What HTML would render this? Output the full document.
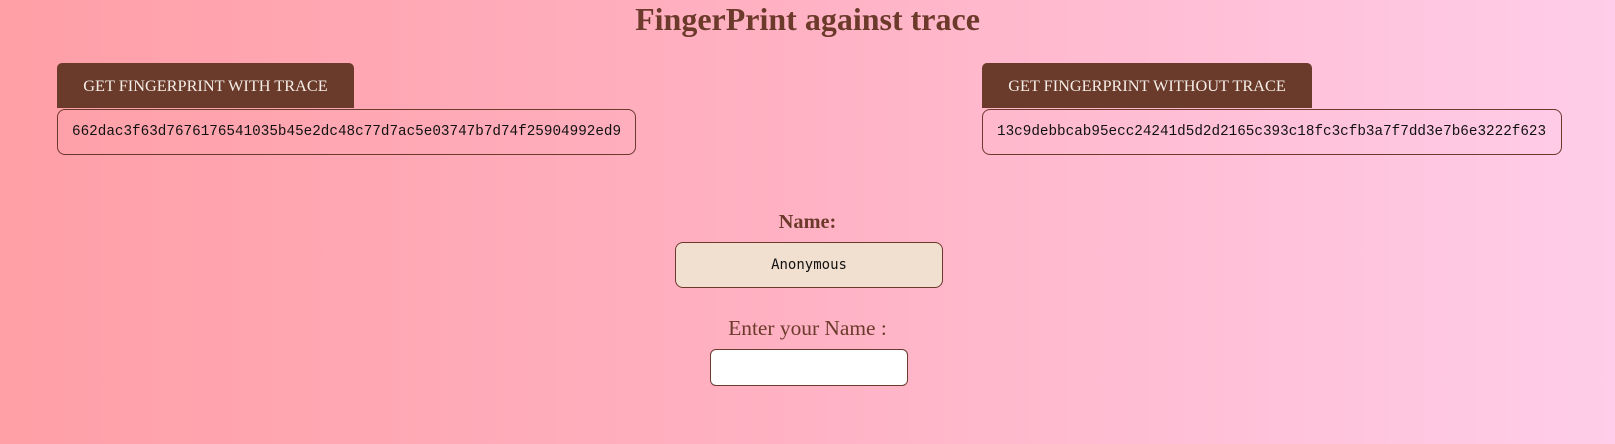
<!DOCTYPE html>
<html><head><style>
*{box-sizing:border-box;margin:0;padding:0}
html,body{width:1615px;height:444px;overflow:hidden}
body{background:linear-gradient(to right,#ff9fa6,#ffb2c4 50%,#ffcde9);font-family:"Liberation Serif",serif;color:#6b3a2b;position:relative}
.a{position:absolute}
h1{position:absolute;left:0;width:1615px;top:0;text-align:center;font-size:32px;font-weight:bold;line-height:38px}
.btn{background:#6a3a2a;color:#f5eee8;font-size:16.3px;border-radius:5px 5px 0 0;display:flex;align-items:center;justify-content:center;height:45px;top:63px}
.hash{border:1px solid #6b3a2b;border-radius:8px;top:109px;height:46px;font-family:"Liberation Mono",monospace;font-size:14.3px;color:#111;display:flex;align-items:center;padding-left:14px}
.lbl{left:0;width:1615px;text-align:center}
</style></head><body>
<h1>FingerPrint against trace</h1>
<div class="a btn" style="left:57px;width:297px">GET FINGERPRINT WITH TRACE</div>
<div class="a hash" style="left:57px;width:579px">662dac3f63d7676176541035b45e2dc48c77d7ac5e03747b7d74f25904992ed9</div>
<div class="a btn" style="left:982px;width:330px">GET FINGERPRINT WITHOUT TRACE</div>
<div class="a hash" style="left:982px;width:580px">13c9debbcab95ecc24241d5d2d2165c393c18fc3cfb3a7f7dd3e7b6e3222f623</div>
<div class="a lbl" style="top:211px;font-size:20.3px;font-weight:bold">Name:</div>
<div class="a" style="left:675px;top:242px;width:268px;height:46px;background:#f1e0d0;border:1px solid #6b3a2b;border-radius:8px;font-family:'DejaVu Sans Mono',monospace;font-size:14px;color:#111;display:flex;align-items:center;justify-content:center">Anonymous</div>
<div class="a lbl" style="top:316px;font-size:21.4px">Enter your Name :</div>
<div class="a" style="left:710px;top:349px;width:198px;height:37px;background:#fff;border:1px solid #6b3a2b;border-radius:6px"></div>
</body></html>
